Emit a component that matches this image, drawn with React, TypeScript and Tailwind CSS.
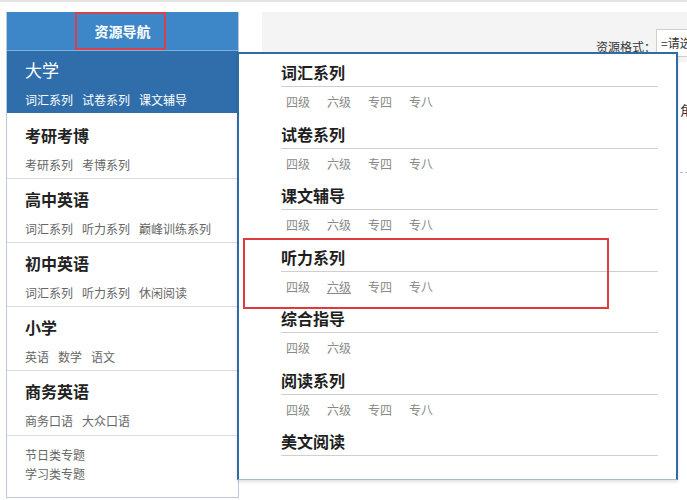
import React from "react";

const font = { fontFamily: '"Noto Sans CJK SC", "Noto Sans", sans-serif' };

type SideSec = { title: string; subs: string[]; h: string; pt: string };

const sideSections: SideSec[] = [
  { title: "考研考博", subs: ["考研系列", "考博系列"], h: "h-[66px]", pt: "pt-[12px]" },
  { title: "高中英语", subs: ["词汇系列", "听力系列", "巅峰训练系列"], h: "h-[64px]", pt: "pt-[10px]" },
  { title: "初中英语", subs: ["词汇系列", "听力系列", "休闲阅读"], h: "h-[64px]", pt: "pt-[10px]" },
  { title: "小学", subs: ["英语", "数学", "语文"], h: "h-[64px]", pt: "pt-[10px]" },
  { title: "商务英语", subs: ["商务口语", "大众口语"], h: "h-[65px]", pt: "pt-[10px]" },
];

const popSections: { title: string; subs: string[] }[] = [
  { title: "词汇系列", subs: ["四级", "六级", "专四", "专八"] },
  { title: "试卷系列", subs: ["四级", "六级", "专四", "专八"] },
  { title: "课文辅导", subs: ["四级", "六级", "专四", "专八"] },
  { title: "听力系列", subs: ["四级", "六级", "专四", "专八"] },
  { title: "综合指导", subs: ["四级", "六级"] },
  { title: "阅读系列", subs: ["四级", "六级", "专四", "专八"] },
];

export default function App() {
  return (
    <div
      className="relative w-[687px] h-[500px] overflow-hidden bg-white border-t-2 border-[#e3e3e3]"
      style={font}
    >
      <div className="flex">
        {/* Sidebar */}
        <div className="ml-[6px] mt-[10px] w-[233px] shrink-0 border-l border-r border-b border-[#b8c9d9] bg-white">
          <div className="h-[39px] bg-[#3d87c8] border-b border-[#7eb0dc] flex items-center justify-center text-white text-[14px] font-bold">
            资源导航
          </div>
          <div className="h-[62px] bg-[#2f6eaa] pl-[18px] pt-[9px]">
            <div className="text-white text-[17px] leading-[20px]">大学</div>
            <div className="mt-[12px] flex text-[12px] leading-[16px] text-white">
              <span className="mr-[9px]">词汇系列</span>
              <span className="mr-[9px]">试卷系列</span>
              <span>课文辅导</span>
            </div>
          </div>
          {sideSections.map((s) => (
            <div key={s.title} className={`${s.h} ${s.pt} pl-[18px] border-b border-[#dcdcdc]`}>
              <div className="text-[16px] leading-[20px] font-bold text-[#222]">{s.title}</div>
              <div className="mt-[12px] flex text-[12px] leading-[16px] text-[#666]">
                {s.subs.map((x) => (
                  <span key={x} className="mr-[9px]">
                    {x}
                  </span>
                ))}
              </div>
            </div>
          ))}
          <div className="h-[61px] pl-[18px] pt-[9px] text-[12px] leading-[19px] text-[#666]">
            <div>节日类专题</div>
            <div>学习类专题</div>
          </div>
        </div>

        {/* Main area */}
        <div className="ml-[23px] flex-1 flex flex-col">
          <div className="mt-[10px] h-[50px] bg-[#f4f4f4] pl-[334px] pt-[17px] flex items-start">
            <span className="mt-[11px] text-[12px] leading-[14px] text-[#333] whitespace-nowrap">资源格式：</span>
            <div className="w-[80px] h-[28px] shrink-0 bg-white border border-[#cfcfcf] text-[12px] text-[#333] pl-[4px] leading-[26px] whitespace-nowrap">
              =请选择=
            </div>
          </div>
          <div className="mt-[40px] pl-[418px] text-[13px] leading-[16px] text-[#333] whitespace-nowrap">角色</div>
          <div className="mt-[54px] ml-[418px] border-t border-dashed border-[#bbb] w-[40px]" />
        </div>
      </div>

      {/* Dropdown popup */}
      <div className="absolute left-[237px] top-[50px] w-[441px] h-[428px] bg-white border-2 border-[#2f6ca6] border-b border-b-[#a9bccd] shadow-[0_2px_3px_rgba(0,0,0,0.12)] pl-[42px] pt-[6px]">
        <div className="w-[377px]">
          {popSections.map((s) => (
            <div key={s.title}>
              <div className="h-[27px] leading-[24px] text-[16px] font-bold text-[#1e1e1e] border-b border-[#cfcfcf]">
                {s.title}
              </div>
              <div className="h-[34.5px] pt-[8px] pl-[5px] flex gap-[17px] text-[12px] leading-[14px] text-[#888]">
                {s.subs.map((x, i) => (
                  <span
                    key={x}
                    className={`w-[24px] whitespace-nowrap ${s.title === "听力系列" && i === 1 ? "underline" : ""}`}
                  >
                    {x}
                  </span>
                ))}
              </div>
            </div>
          ))}
          <div className="h-[27px] leading-[24px] text-[16px] font-bold text-[#1e1e1e] border-b border-[#cfcfcf]">
            美文阅读
          </div>
        </div>
      </div>

      {/* Red annotation boxes */}
      <div className="absolute left-[75px] top-[10px] w-[91px] h-[38px] border-2 border-[#d8414b]" />
      <div className="absolute left-[243px] top-[236px] w-[366px] h-[71px] border-2 border-[#e0393e]" />
    </div>
  );
}
